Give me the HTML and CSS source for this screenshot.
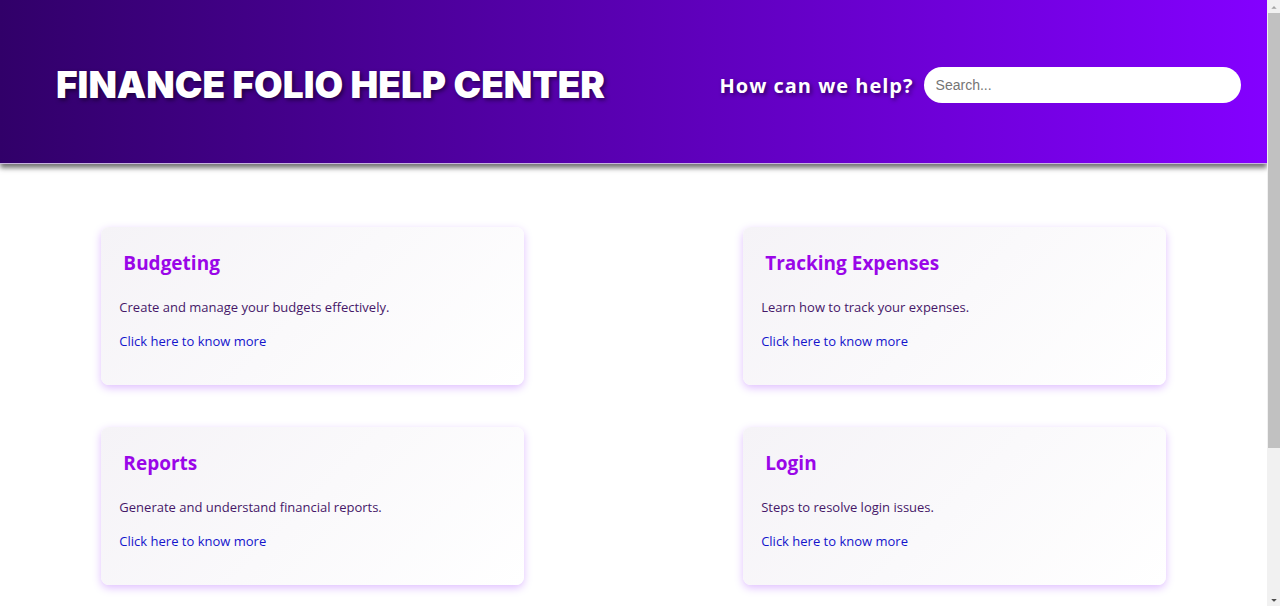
FILE: index.html
```html
<!DOCTYPE html>
<html lang="en">
<head>
<meta charset="utf-8">
<meta name="viewport" content="width=device-width, initial-scale=1">
<title>Finance Folio Help Center</title>
<link rel="stylesheet" href="styles.css">
</head>
<body>
<div class="page">
  <header class="header">
    <h1 class="title">FINANCE FOLIO HELP CENTER</h1>
    <form class="search">
      <label class="search-label" for="search">How can we help?</label>
      <input class="search-input" id="search" type="text" placeholder="Search...">
    </form>
  </header>
  <main class="cards">
    <section class="card">
      <h2 class="card-title">Budgeting</h2>
      <p class="card-text">Create and manage your budgets effectively.</p>
      <a class="card-link" href="#budgeting">Click here to know more</a>
    </section>
    <section class="card">
      <h2 class="card-title">Tracking Expenses</h2>
      <p class="card-text">Learn how to track your expenses.</p>
      <a class="card-link" href="#tracking">Click here to know more</a>
    </section>
    <section class="card">
      <h2 class="card-title">Reports</h2>
      <p class="card-text">Generate and understand financial reports.</p>
      <a class="card-link" href="#reports">Click here to know more</a>
    </section>
    <section class="card">
      <h2 class="card-title">Login</h2>
      <p class="card-text">Steps to resolve login issues.</p>
      <a class="card-link" href="#login">Click here to know more</a>
    </section>
  </main>
</div>
<div class="scrollbar" aria-hidden="true">
  <svg class="arrow" viewBox="0 0 13 13"><path d="M6 6h1v1h1v1h1v1H4V8h1V7h1z" fill="#a3a3a3"/></svg>
  <div class="track"><div class="thumb"></div></div>
  <svg class="arrow" viewBox="0 0 13 13"><path d="M4 6h5v1H8v1H7v1H6V8H5V7H4z" fill="#505050"/></svg>
</div>
</body>
</html>
```
FILE: styles.css
```css
* {
  box-sizing: border-box;
}

body {
  margin: 0;
  display: flex;
  height: 100vh;
  overflow: hidden;
  background: #fff;
  font-family: "Open Sans", "Noto Sans", sans-serif;
}

.page {
  flex: 1;
  min-width: 0;
  overflow: hidden;
}

.header {
  display: flex;
  align-items: center;
  justify-content: space-between;
  gap: 24px;
  padding: 55px 26px 48px 56px;
  border-bottom: 1px solid #c8b4e0;
  background: linear-gradient(to right, #310069, #8400ff);
  box-shadow: 0 4px 5px rgba(0, 0, 0, 0.55);
}

.title {
  margin: 0;
  color: #fff;
  font-family: Inter, sans-serif;
  font-size: 37px;
  font-weight: 900;
  line-height: 60px;
  white-space: nowrap;
  text-shadow: 2px 2px 4px rgba(0, 0, 0, 0.5);
}

.search {
  display: flex;
  align-items: center;
  gap: 10px;
  margin: 0;
}

.search-label {
  color: #fff;
  font-size: 20px;
  font-weight: 700;
  letter-spacing: 1px;
  white-space: nowrap;
  text-shadow: 2px 2px 4px rgba(0, 0, 0, 0.5);
}

.search-input {
  width: 24.8vw;
  height: 36px;
  padding: 0 12px;
  border: 0;
  border-radius: 18px;
  background: #fff;
  font-family: "Liberation Sans", Arial, sans-serif;
  font-size: 14px;
}

.search-input::placeholder {
  color: #757575;
}

.cards {
  display: grid;
  grid-template-columns: 39.7% 39.7%;
  justify-content: space-between;
  row-gap: 42px;
  padding: 63px 8%;
}

.card {
  padding: 20px 18px 34px;
  border-radius: 8px;
  background: linear-gradient(135deg, #f5f3f7, #fff);
  box-shadow: 0 3px 8px rgba(132, 0, 255, 0.25);
}

.card-title {
  margin: 0 4px 18px;
  color: #9a06e8;
  font-size: 19px;
  font-weight: 700;
  line-height: 32px;
}

.card-text {
  margin: 0 0 14px;
  color: #461768;
  font-size: 13px;
  line-height: 20px;
}

.card-link {
  display: block;
  color: #1414cc;
  font-size: 13px;
  line-height: 20px;
  text-decoration: none;
}

.scrollbar {
  display: flex;
  flex-direction: column;
  width: 13px;
  padding-left: 1px;
  background: #f1f1f1;
}

.arrow {
  width: 12px;
  height: 13px;
}

.track {
  flex: 1;
}

.thumb {
  height: 75%;
  background: #c1c1c1;
}
```
